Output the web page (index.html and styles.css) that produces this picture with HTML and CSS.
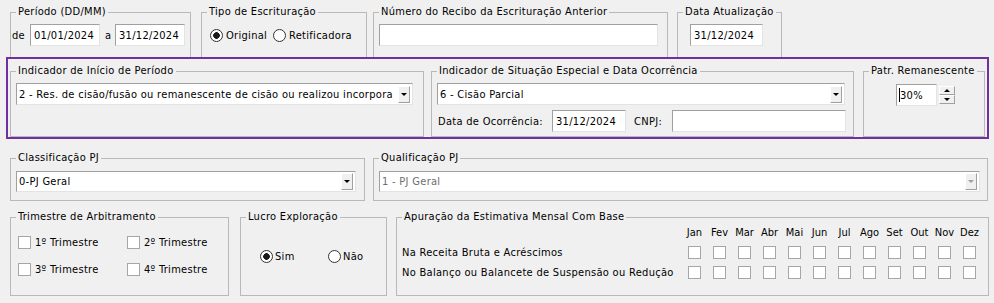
FILE: index.html
```html
<!DOCTYPE html>
<html lang="pt-BR">
<head>
    <meta charset="UTF-8">
    <title>Dados da Escrituração</title>
    <link rel="stylesheet" href="styles.css">
</head>
<body>
    <div class="row row-top">
        <fieldset class="grp g-periodo">
            <legend>Período (DD/MM)</legend>
            <div class="periodo">
                <span class="lbl-de">de</span>
                <input type="text" class="txt w-data" value="01/01/2024">
                <span class="lbl-a">a</span>
                <input type="text" class="txt w-data" value="31/12/2024">
            </div>
        </fieldset>
        <fieldset class="grp g-tipo">
            <legend>Tipo de Escrituração</legend>
            <div class="tipo">
                <label class="opt opt-original"><input type="radio" name="tipo" class="rad" checked>Original</label>
                <label class="opt"><input type="radio" name="tipo" class="rad">Retificadora</label>
            </div>
        </fieldset>
        <fieldset class="grp g-recibo">
            <legend>Número do Recibo da Escrituração Anterior</legend>
            <div class="recibo">
                <input type="text" class="txt w-recibo" value="">
            </div>
        </fieldset>
        <fieldset class="grp g-atual">
            <legend>Data Atualização</legend>
            <div class="atual">
                <input type="text" class="txt w-data2" value="31/12/2024">
            </div>
        </fieldset>
    </div>

    <div class="destaque">
        <fieldset class="grp g-mid g-inicio">
            <legend>Indicador de Início de Período</legend>
            <div class="inicio">
                <div class="combo w-inicio">
                    <span class="combo-txt">2 - Res. de cisão/fusão ou remanescente de cisão ou realizou incorpora</span>
                    <span class="drop"><span class="tri"></span></span>
                </div>
            </div>
        </fieldset>
        <fieldset class="grp g-mid g-situacao">
            <legend>Indicador de Situação Especial e Data Ocorrência</legend>
            <div class="situacao">
                <div class="combo w-situacao">
                    <span class="combo-txt">6 - Cisão Parcial</span>
                    <span class="drop"><span class="tri"></span></span>
                </div>
                <div class="ocorrencia">
                    <span class="lbl-ocor">Data de Ocorrência:</span>
                    <input type="text" class="txt w-ocor" value="31/12/2024">
                    <span class="lbl-cnpj">CNPJ:</span>
                    <input type="text" class="txt w-cnpj" value="">
                </div>
            </div>
        </fieldset>
        <fieldset class="grp g-mid g-patr">
            <legend>Patr. Remanescente</legend>
            <div class="patr">
                <div class="txt spin-txt"><span class="caret"></span>30%</div>
                <div class="spin">
                    <span class="spin-btn"><span class="tri-up"></span></span>
                    <span class="spin-btn"><span class="tri"></span></span>
                </div>
            </div>
        </fieldset>
    </div>

    <div class="row row-pj">
        <fieldset class="grp g-pj g-class">
            <legend>Classificação PJ</legend>
            <div class="pj">
                <div class="combo w-class">
                    <span class="combo-txt">0-PJ Geral</span>
                    <span class="drop"><span class="tri"></span></span>
                </div>
            </div>
        </fieldset>
        <fieldset class="grp g-pj g-qual">
            <legend>Qualificação PJ</legend>
            <div class="pj">
                <div class="combo combo-off w-qual">
                    <span class="combo-txt">1 - PJ Geral</span>
                    <span class="drop"><span class="tri"></span></span>
                </div>
            </div>
        </fieldset>
    </div>

    <div class="row row-bottom">
        <fieldset class="grp g-low g-trim">
            <legend>Trimestre de Arbitramento</legend>
            <div class="trim">
                <label class="opt"><input type="checkbox" class="chk">1º Trimestre</label>
                <label class="opt"><input type="checkbox" class="chk">2º Trimestre</label>
                <label class="opt"><input type="checkbox" class="chk">3º Trimestre</label>
                <label class="opt"><input type="checkbox" class="chk">4º Trimestre</label>
            </div>
        </fieldset>
        <fieldset class="grp g-low g-lucro">
            <legend>Lucro Exploração</legend>
            <div class="lucro">
                <label class="opt opt-sim"><input type="radio" name="lucro" class="rad" checked>Sim</label>
                <label class="opt opt-nao"><input type="radio" name="lucro" class="rad">Não</label>
            </div>
        </fieldset>
        <fieldset class="grp g-low g-apur">
            <legend>Apuração da Estimativa Mensal Com Base</legend>
            <div class="apur">
                <span></span>
                <span class="mes">Jan</span><span class="mes">Fev</span><span class="mes">Mar</span>
                <span class="mes">Abr</span><span class="mes">Mai</span><span class="mes">Jun</span>
                <span class="mes">Jul</span><span class="mes">Ago</span><span class="mes">Set</span>
                <span class="mes">Out</span><span class="mes">Nov</span><span class="mes">Dez</span>

                <span class="apur-lbl">Na Receita Bruta e Acréscimos</span>
                <input type="checkbox" class="chk"><input type="checkbox" class="chk"><input type="checkbox" class="chk">
                <input type="checkbox" class="chk"><input type="checkbox" class="chk"><input type="checkbox" class="chk">
                <input type="checkbox" class="chk"><input type="checkbox" class="chk"><input type="checkbox" class="chk">
                <input type="checkbox" class="chk"><input type="checkbox" class="chk"><input type="checkbox" class="chk">

                <span class="apur-lbl">No Balanço ou Balancete de Suspensão ou Redução</span>
                <input type="checkbox" class="chk"><input type="checkbox" class="chk"><input type="checkbox" class="chk">
                <input type="checkbox" class="chk"><input type="checkbox" class="chk"><input type="checkbox" class="chk">
                <input type="checkbox" class="chk"><input type="checkbox" class="chk"><input type="checkbox" class="chk">
                <input type="checkbox" class="chk"><input type="checkbox" class="chk"><input type="checkbox" class="chk">
            </div>
        </fieldset>
    </div>
</body>
</html>
```

FILE: styles.css
```css
body {
    margin: 0;
    padding: 5px 0 0 0;
    width: 994px;
    height: 303px;
    overflow: hidden;
    box-sizing: border-box;
    background-color: #f0f0f0;
    font-family: "DejaVu Sans Condensed", "DejaVu Sans", sans-serif;
    font-stretch: condensed;
    font-size: 11px;
    letter-spacing: 0.3px;
    color: #000;
}
.row {
    display: flex;
    align-items: flex-start;
}

/* group boxes */
.grp {
    margin: 0;
    padding: 0;
    min-width: 0;
    box-sizing: border-box;
    border: 1px solid #b9b9b9;
}
.grp legend {
    margin-left: 5px;
    padding: 0 2px;
    height: 14px;
    line-height: 14px;
}

/* text boxes */
.txt {
    box-sizing: border-box;
    height: 22px;
    margin: 0;
    padding: 0 3px;
    border: 1px solid;
    border-color: #a0a0a0 #e3e3e3 #e3e3e3 #a0a0a0;
    background: #fff;
    font: inherit;
    letter-spacing: inherit;
    color: #000;
    outline: none;
}

/* combo boxes */
.combo {
    box-sizing: border-box;
    height: 22px;
    display: flex;
    align-items: center;
    padding: 0 2px 0 2px;
    border: 1px solid;
    border-color: #a0a0a0 #e3e3e3 #e3e3e3 #a0a0a0;
    background: #fff;
}
.combo-txt {
    flex: 1;
    white-space: nowrap;
    overflow: hidden;
}
.drop {
    box-sizing: border-box;
    width: 12px;
    height: 17px;
    display: flex;
    align-items: center;
    justify-content: center;
    border: 1px solid;
    border-color: #fff #a0a0a0 #a0a0a0 #fff;
    background: #f0f0f0;
}
.tri {
    width: 0;
    height: 0;
    border-left: 3px solid transparent;
    border-right: 3px solid transparent;
    border-top: 3px solid #000;
}
.tri-up {
    width: 0;
    height: 0;
    border-left: 3px solid transparent;
    border-right: 3px solid transparent;
    border-bottom: 3px solid #000;
}
.combo-off .combo-txt {
    color: #6d6d6d;
}
.combo-off .tri {
    border-top-color: #a0a0a0;
}

/* radios and checkboxes */
.opt {
    display: flex;
    align-items: center;
    gap: 3px;
    white-space: nowrap;
}
.rad {
    appearance: none;
    margin: 0;
    width: 13px;
    height: 13px;
    border: 1px solid #333;
    border-radius: 50%;
    background: #fff;
    flex: none;
}
.rad:checked {
    background: radial-gradient(circle, #1a1a1a 0 3px, #fff 3.6px);
}
.chk {
    appearance: none;
    margin: 0;
    width: 13px;
    height: 13px;
    border: 1px solid #a6a6a6;
    background: #fff;
    flex: none;
}

/* first row */
.row-top .grp {
    height: 52px;
    border-bottom: none;
}
.g-periodo {
    margin-left: 10px;
    width: 181px;
}
.g-tipo {
    margin-left: 10px;
    width: 166px;
}
.g-recibo {
    margin-left: 6px;
    width: 295px;
}
.g-atual {
    margin-left: 9px;
    width: 105px;
}
.periodo {
    display: flex;
    align-items: center;
    padding: 5px 0 0 1px;
}
.lbl-de {
    width: 18px;
}
.lbl-a {
    width: 10px;
    margin-left: 5px;
}
.w-data {
    width: 70px;
}
.tipo {
    display: flex;
    padding: 10px 0 0 8px;
}
.opt-original {
    width: 63px;
}
.recibo {
    padding: 5px 0 0 5px;
}
.w-recibo {
    width: 279px;
}
.atual {
    padding: 5px 0 0 12px;
}
.w-data2 {
    width: 73px;
}

/* highlighted block */
.destaque {
    box-sizing: border-box;
    display: flex;
    align-items: flex-start;
    margin-left: 6px;
    width: 983px;
    height: 82px;
    border: 2px solid #7030a0;
}
.g-mid {
    margin-top: 5px;
    height: 73px;
}
.g-inicio {
    margin-left: 2px;
    width: 414px;
}
.g-situacao {
    margin-left: 7px;
    width: 423px;
}
.g-patr {
    margin-left: 9px;
    width: 122px;
}
.inicio {
    padding: 5px 0 0 5px;
}
.w-inicio {
    width: 397px;
}
.situacao {
    padding: 5px 0 0 5px;
}
.w-situacao {
    width: 408px;
}
.ocorrencia {
    display: flex;
    align-items: center;
    margin-top: 5px;
}
.lbl-ocor {
    width: 114px;
    margin-left: 1px;
}
.w-ocor {
    width: 74px;
}
.lbl-cnpj {
    width: 38px;
    margin-left: 8px;
}
.w-cnpj {
    width: 174px;
}
.patr {
    display: flex;
    align-items: flex-start;
    padding: 6px 0 0 32px;
}
.spin-txt {
    width: 41px;
    display: flex;
    align-items: center;
    padding-left: 2px;
}
.caret {
    width: 1px;
    height: 14px;
    background: #000;
}
.spin {
    margin: 2px 0 0 2px;
    display: flex;
    flex-direction: column;
}
.spin-btn {
    box-sizing: border-box;
    width: 16px;
    height: 9px;
    display: flex;
    align-items: center;
    justify-content: center;
    border: 1px solid;
    border-color: #fff #a0a0a0 #a0a0a0 #fff;
    background: #f0f0f0;
}

/* classification row */
.row-pj {
    margin-top: 12px;
}
.g-pj {
    height: 50px;
}
.g-class {
    margin-left: 10px;
    width: 355px;
}
.g-qual {
    margin-left: 8px;
    width: 615px;
}
.pj {
    padding: 6px 0 0 5px;
}
.w-class {
    width: 340px;
    height: 21px;
}
.w-qual {
    width: 601px;
    height: 21px;
}

/* bottom row */
.row-bottom {
    margin-top: 9px;
}
.g-low {
    height: 86px;
}
.g-trim {
    margin-left: 10px;
    width: 219px;
}
.g-lucro {
    margin-left: 11px;
    width: 147px;
}
.g-apur {
    margin-left: 9px;
    width: 593px;
}
.trim {
    display: grid;
    grid-template-columns: 109px auto;
    row-gap: 14px;
    padding: 12px 0 0 7px;
}
.trim .opt {
    gap: 4px;
    height: 13px;
}
.lucro {
    display: flex;
    padding: 26px 0 0 19px;
}
.opt-sim {
    width: 68px;
}
.lucro .opt {
    gap: 2px;
}
.apur {
    display: grid;
    grid-template-columns: 280px repeat(12, 25px);
    grid-template-rows: 14px 13px 13px;
    row-gap: 7px;
    align-items: center;
    padding: 1px 0 0 5px;
}
.mes {
    text-align: center;
    white-space: nowrap;
    letter-spacing: 0;
}
.apur .chk {
    justify-self: center;
}
.apur-lbl {
    white-space: nowrap;
}
```
